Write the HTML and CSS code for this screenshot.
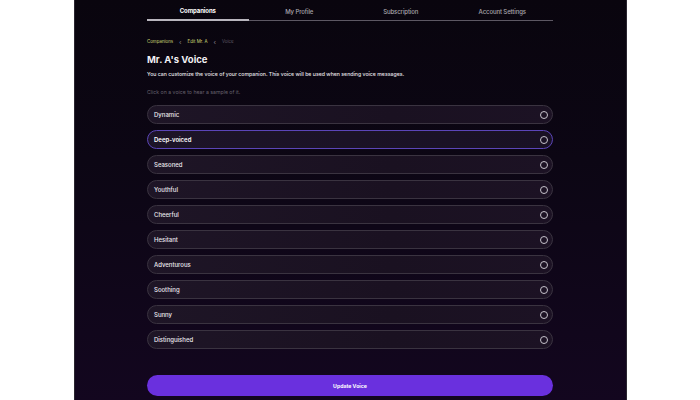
FILE: index.html
```html
<!DOCTYPE html>
<html>
<head>
<meta charset="utf-8">
<link rel="stylesheet" href="styles.css">
</head>
<body>
<div class="panel">
  <div class="inner">
    <nav class="tabs">
      <div class="tab active">Companions</div>
      <div class="tab">My Profile</div>
      <div class="tab">Subscription</div>
      <div class="tab">Account Settings</div>
    </nav>
    <div class="crumbs">
      <span class="link">Companions</span>
      <span class="sep">‹</span>
      <span class="link">Edit Mr. A</span>
      <span class="sep">‹</span>
      <span class="cur">Voice</span>
    </div>
    <h1 class="title">Mr. A's Voice</h1>
    <p class="sub">You can customize the voice of your companion. This voice will be used when sending voice messages.</p>
    <p class="hint">Click on a voice to hear a sample of it.</p>
    <div class="list">
      <div class="row"><span>Dynamic</span><i class="radio"></i></div>
      <div class="row selected"><span>Deep-voiced</span><i class="radio"></i></div>
      <div class="row"><span>Seasoned</span><i class="radio"></i></div>
      <div class="row"><span>Youthful</span><i class="radio"></i></div>
      <div class="row"><span>Cheerful</span><i class="radio"></i></div>
      <div class="row"><span>Hesitant</span><i class="radio"></i></div>
      <div class="row"><span>Adventurous</span><i class="radio"></i></div>
      <div class="row"><span>Soothing</span><i class="radio"></i></div>
      <div class="row"><span>Sunny</span><i class="radio"></i></div>
      <div class="row"><span>Distinguished</span><i class="radio"></i></div>
    </div>
    <button class="btn">Update Voice</button>
  </div>
</div>
</body>
</html>
```
FILE: styles.css
```css
html, body {
  margin: 0;
  padding: 0;
  background: #ffffff;
}
body {
  font-family: Inter, "Noto Sans", sans-serif;
  width: 700px;
  height: 400px;
  overflow: hidden;
}
.panel {
  margin-left: 74px;
  width: 553px;
  height: 400px;
  background: linear-gradient(180deg, #09050e 0%, #0c0614 40%, #13061f 100%);
  box-shadow: inset 1px 0 0 #2a2630, inset -1px 0 0 #2a2630;
}
.inner {
  width: 406px;
  margin-left: 73px;
  display: flex;
  flex-direction: column;
}
.tabs {
  display: flex;
  height: 21px;
  box-sizing: border-box;
  border-bottom: 1px solid #5d5863;
}
.tab {
  flex: 1;
  text-align: center;
  font-size: 6px;
  line-height: 23px;
  color: #a9a5ad;
  font-weight: 500;
  letter-spacing: -0.1px;
}
.tab.active {
  color: #ffffff;
  font-weight: 700;
  border-bottom: 2px solid #b9b6be;
  margin-bottom: -1px;
  line-height: 21px;
}
.crumbs {
  margin-top: 17px;
  height: 8px;
  line-height: 8px;
  font-size: 4.4px;
  display: flex;
  align-items: center;
  gap: 4px;
  color: #5c5862;
}
.crumbs .link { color: #cfdc7a; }
.crumbs .sep { color: #8a8690; font-size: 6.5px; margin: 0 2px; }
.crumbs .cur { color: #5f5b66; }
.title {
  margin: 8px 0 0;
  font-size: 9.5px;
  line-height: 12px;
  font-weight: 700;
  color: #f2f0f4;
}
.sub {
  margin: 4px 0 0;
  font-size: 5.2px;
  line-height: 8px;
  color: #e8e6ea;
  font-weight: 500;
}
.hint {
  margin: 10px 0 0;
  font-size: 5.2px;
  line-height: 8px;
  color: #66616d;
}
.list {
  margin-top: 9px;
  display: flex;
  flex-direction: column;
  gap: 6px;
}
.row {
  height: 19px;
  box-sizing: border-box;
  border: 1px solid #3a3340;
  border-radius: 10px;
  background: linear-gradient(90deg, #1e1526 0%, #1a1121 60%, #1c1224 100%);
  display: flex;
  align-items: center;
  justify-content: space-between;
  padding: 0 4px 0 6px;
  font-size: 6px;
  color: #ece9ef;
  font-weight: 500;
}
.row.selected {
  border-color: #5b45b8;
  background: linear-gradient(90deg, #1d1428 0%, #191124 100%);
  font-weight: 600;
  color: #ffffff;
}
.radio {
  width: 6px;
  height: 6px;
  border: 1px solid #c7c3cc;
  border-radius: 50%;
  display: block;
}
.btn {
  margin-top: 26px;
  height: 21px;
  border: none;
  border-radius: 11px;
  background: #6a30de;
  color: #ffffff;
  font-family: Inter, "Noto Sans", sans-serif;
  font-size: 5.2px;
  font-weight: 700;
  padding: 0;
}
```
